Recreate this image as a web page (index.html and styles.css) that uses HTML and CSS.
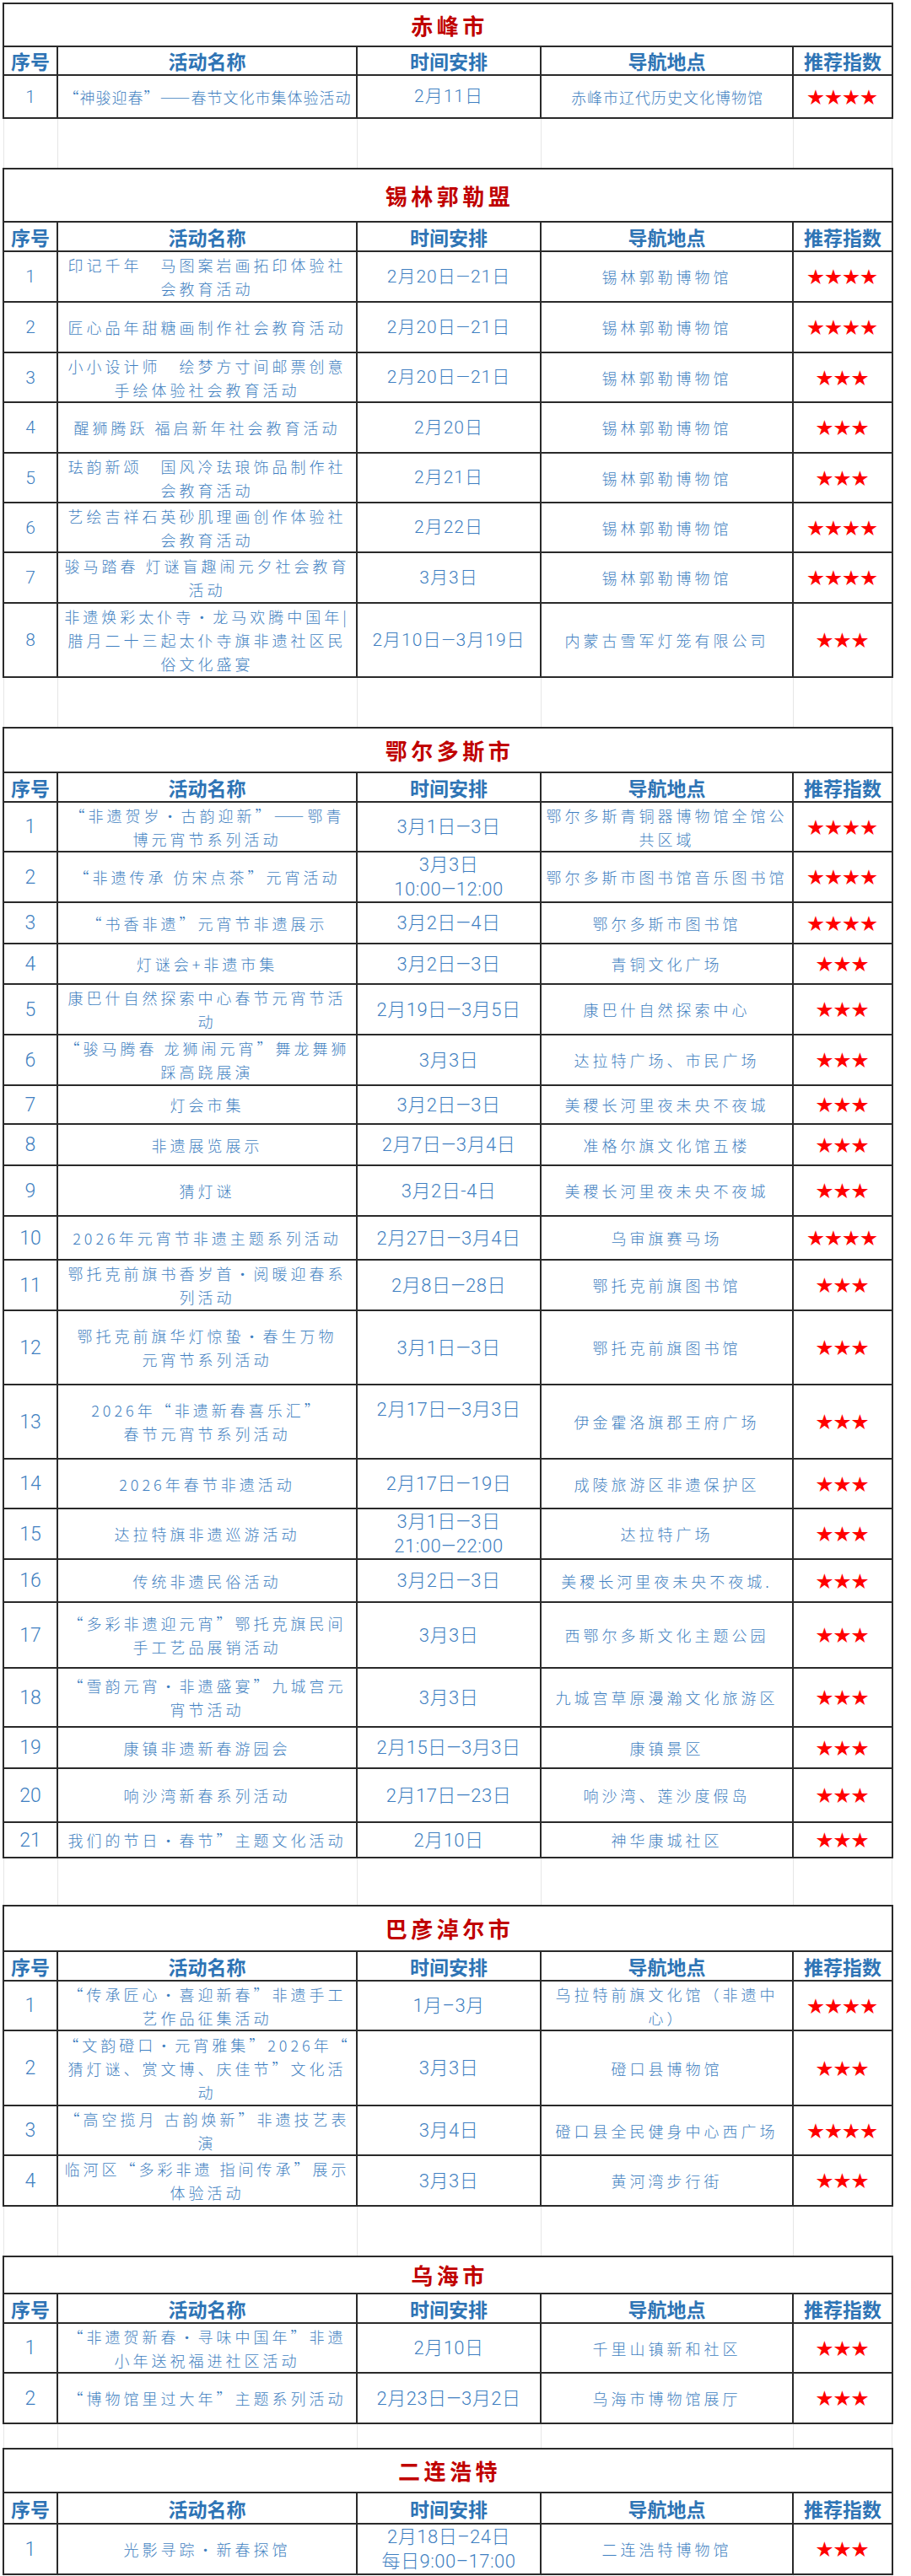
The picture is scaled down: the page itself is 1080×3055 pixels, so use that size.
FILE: index.html
```html
<!DOCTYPE html>
<html lang="zh-CN">
<head>
<meta charset="utf-8">
<title>活动导航</title>
<link rel="stylesheet" href="styles.css">
</head>
<body>
<div class="sheet">

<table class="tbl t1">
<colgroup><col class="c1"><col class="c2"><col class="c3"><col class="c4"><col class="c5"></colgroup>
<tr class="ttl h51"><td colspan="5">赤峰市</td></tr>
<tr class="hd h34"><th>序号</th><th>活动名称</th><th>时间安排</th><th>导航地点</th><th>推荐指数</th></tr>
<tr class="h51"><td class="no">1</td><td class="nm">“神骏迎春”——春节文化市集体验活动</td><td class="tm">2月11日</td><td class="lc">赤峰市辽代历史文化博物馆</td><td class="st">★★★★</td></tr>
</table>

<div class="gap"><span></span><span></span><span></span><span></span><span></span></div>

<table class="tbl">
<colgroup><col class="c1"><col class="c2"><col class="c3"><col class="c4"><col class="c5"></colgroup>
<tr class="ttl h63"><td colspan="5">锡林郭勒盟</td></tr>
<tr class="hd h35"><th>序号</th><th>活动名称</th><th>时间安排</th><th>导航地点</th><th>推荐指数</th></tr>
<tr class="h60"><td class="no">1</td><td class="nm">印记千年　马图案岩画拓印体验社<br>会教育活动</td><td class="tm">2月20日—21日</td><td class="lc">锡林郭勒博物馆</td><td class="st">★★★★</td></tr>
<tr class="h60"><td class="no">2</td><td class="nm">匠心品年甜糖画制作社会教育活动</td><td class="tm">2月20日—21日</td><td class="lc">锡林郭勒博物馆</td><td class="st">★★★★</td></tr>
<tr class="h59"><td class="no">3</td><td class="nm">小小设计师　绘梦方寸间邮票创意<br>手绘体验社会教育活动</td><td class="tm">2月20日—21日</td><td class="lc">锡林郭勒博物馆</td><td class="st">★★★</td></tr>
<tr class="h60"><td class="no">4</td><td class="nm">醒狮腾跃 福启新年社会教育活动</td><td class="tm">2月20日</td><td class="lc">锡林郭勒博物馆</td><td class="st">★★★</td></tr>
<tr class="h59"><td class="no">5</td><td class="nm">珐韵新颂　国风冷珐琅饰品制作社<br>会教育活动</td><td class="tm">2月21日</td><td class="lc">锡林郭勒博物馆</td><td class="st">★★★</td></tr>
<tr class="h59"><td class="no">6</td><td class="nm">艺绘吉祥石英砂肌理画创作体验社<br>会教育活动</td><td class="tm">2月22日</td><td class="lc">锡林郭勒博物馆</td><td class="st">★★★★</td></tr>
<tr class="h60"><td class="no">7</td><td class="nm">骏马踏春 灯谜盲趣闹元夕社会教育<br>活动</td><td class="tm">3月3日</td><td class="lc">锡林郭勒博物馆</td><td class="st">★★★★</td></tr>
<tr class="h88"><td class="no">8</td><td class="nm">非遗焕彩太仆寺·龙马欢腾中国年|<br>腊月二十三起太仆寺旗非遗社区民<br>俗文化盛宴</td><td class="tm">2月10日—3月19日</td><td class="lc">内蒙古雪军灯笼有限公司</td><td class="st">★★★</td></tr>
</table>

<div class="gap"><span></span><span></span><span></span><span></span><span></span></div>

<table class="tbl big">
<colgroup><col class="c1"><col class="c2"><col class="c3"><col class="c4"><col class="c5"></colgroup>
<tr class="ttl h53"><td colspan="5">鄂尔多斯市</td></tr>
<tr class="hd h35"><th>序号</th><th>活动名称</th><th>时间安排</th><th>导航地点</th><th>推荐指数</th></tr>
<tr class="h59"><td class="no">1</td><td class="nm">“非遗贺岁·古韵迎新”——鄂青<br>博元宵节系列活动</td><td class="tm">3月1日—3日</td><td class="lc">鄂尔多斯青铜器博物馆全馆公<br>共区域</td><td class="st">★★★★</td></tr>
<tr class="h59"><td class="no">2</td><td class="nm">“非遗传承 仿宋点茶”元宵活动</td><td class="tm">3月3日<br>10:00—12:00</td><td class="lc">鄂尔多斯市图书馆音乐图书馆</td><td class="st">★★★★</td></tr>
<tr class="h49"><td class="no">3</td><td class="nm">“书香非遗”元宵节非遗展示</td><td class="tm">3月2日—4日</td><td class="lc">鄂尔多斯市图书馆</td><td class="st">★★★★</td></tr>
<tr class="h48"><td class="no">4</td><td class="nm">灯谜会+非遗市集</td><td class="tm">3月2日—3日</td><td class="lc">青铜文化广场</td><td class="st">★★★</td></tr>
<tr class="h60"><td class="no">5</td><td class="nm">康巴什自然探索中心春节元宵节活<br>动</td><td class="tm">2月19日—3月5日</td><td class="lc">康巴什自然探索中心</td><td class="st">★★★</td></tr>
<tr class="h60"><td class="no">6</td><td class="nm">“骏马腾春 龙狮闹元宵”舞龙舞狮<br>踩高跷展演</td><td class="tm">3月3日</td><td class="lc">达拉特广场、市民广场</td><td class="st">★★★</td></tr>
<tr class="h46"><td class="no">7</td><td class="nm">灯会市集</td><td class="tm">3月2日—3日</td><td class="lc">美稷长河里夜未央不夜城</td><td class="st">★★★</td></tr>
<tr class="h49"><td class="no">8</td><td class="nm">非遗展览展示</td><td class="tm">2月7日—3月4日</td><td class="lc">准格尔旗文化馆五楼</td><td class="st">★★★</td></tr>
<tr class="h60"><td class="no">9</td><td class="nm">猜灯谜</td><td class="tm">3月2日-4日</td><td class="lc">美稷长河里夜未央不夜城</td><td class="st">★★★</td></tr>
<tr class="h52"><td class="no">10</td><td class="nm">2026年元宵节非遗主题系列活动</td><td class="tm">2月27日—3月4日</td><td class="lc">乌审旗赛马场</td><td class="st">★★★★</td></tr>
<tr class="h60"><td class="no">11</td><td class="nm">鄂托克前旗书香岁首·阅暖迎春系<br>列活动</td><td class="tm">2月8日—28日</td><td class="lc">鄂托克前旗图书馆</td><td class="st">★★★</td></tr>
<tr class="h88"><td class="no">12</td><td class="nm">鄂托克前旗华灯惊蛰·春生万物<br>元宵节系列活动</td><td class="tm">3月1日—3日</td><td class="lc">鄂托克前旗图书馆</td><td class="st">★★★</td></tr>
<tr class="h88"><td class="no">13</td><td class="nm">2026年“非遗新春喜乐汇”<br>春节元宵节系列活动</td><td class="tm">2月17日—3月3日<br>&nbsp;</td><td class="lc">伊金霍洛旗郡王府广场</td><td class="st">★★★</td></tr>
<tr class="h59"><td class="no">14</td><td class="nm">2026年春节非遗活动</td><td class="tm">2月17日—19日</td><td class="lc">成陵旅游区非遗保护区</td><td class="st">★★★</td></tr>
<tr class="h60"><td class="no">15</td><td class="nm">达拉特旗非遗巡游活动</td><td class="tm">3月1日—3日<br>21:00—22:00</td><td class="lc">达拉特广场</td><td class="st">★★★</td></tr>
<tr class="h51"><td class="no">16</td><td class="nm">传统非遗民俗活动</td><td class="tm">3月2日—3日</td><td class="lc">美稷长河里夜未央不夜城.</td><td class="st">★★★</td></tr>
<tr class="h78"><td class="no">17</td><td class="nm">“多彩非遗迎元宵”鄂托克旗民间<br>手工艺品展销活动</td><td class="tm">3月3日</td><td class="lc">西鄂尔多斯文化主题公园</td><td class="st">★★★</td></tr>
<tr class="h70"><td class="no">18</td><td class="nm">“雪韵元宵·非遗盛宴”九城宫元<br>宵节活动</td><td class="tm">3月3日</td><td class="lc">九城宫草原漫瀚文化旅游区</td><td class="st">★★★</td></tr>
<tr class="h49"><td class="no">19</td><td class="nm">康镇非遗新春游园会</td><td class="tm">2月15日—3月3日</td><td class="lc">康镇景区</td><td class="st">★★★</td></tr>
<tr class="h64"><td class="no">20</td><td class="nm">响沙湾新春系列活动</td><td class="tm">2月17日—23日</td><td class="lc">响沙湾、莲沙度假岛</td><td class="st">★★★</td></tr>
<tr class="h42"><td class="no">21</td><td class="nm">我们的节日·春节”主题文化活动</td><td class="tm">2月10日</td><td class="lc">神华康城社区</td><td class="st">★★★</td></tr>
</table>

<div class="gap g56"><span></span><span></span><span></span><span></span><span></span></div>

<table class="tbl big">
<colgroup><col class="c1"><col class="c2"><col class="c3"><col class="c4"><col class="c5"></colgroup>
<tr class="ttl h54"><td colspan="5">巴彦淖尔市</td></tr>
<tr class="hd h35"><th>序号</th><th>活动名称</th><th>时间安排</th><th>导航地点</th><th>推荐指数</th></tr>
<tr class="h59"><td class="no">1</td><td class="nm">“传承匠心·喜迎新春”非遗手工<br>艺作品征集活动</td><td class="tm">1月–3月</td><td class="lc">乌拉特前旗文化馆（非遗中<br>心）</td><td class="st">★★★★</td></tr>
<tr class="h89"><td class="no">2</td><td class="nm">“文韵磴口·元宵雅集”2026年“<br>猜灯谜、赏文博、庆佳节”文化活<br>动</td><td class="tm">3月3日</td><td class="lc">磴口县博物馆</td><td class="st">★★★</td></tr>
<tr class="h59"><td class="no">3</td><td class="nm">“高空揽月 古韵焕新”非遗技艺表<br>演</td><td class="tm">3月4日</td><td class="lc">磴口县全民健身中心西广场</td><td class="st">★★★★</td></tr>
<tr class="h60"><td class="no">4</td><td class="nm">临河区“多彩非遗 指间传承”展示<br>体验活动</td><td class="tm">3月3日</td><td class="lc">黄河湾步行街</td><td class="st">★★★</td></tr>
</table>

<div class="gap"><span></span><span></span><span></span><span></span><span></span></div>

<table class="tbl big">
<colgroup><col class="c1"><col class="c2"><col class="c3"><col class="c4"><col class="c5"></colgroup>
<tr class="ttl h44"><td colspan="5">乌海市</td></tr>
<tr class="hd h35"><th>序号</th><th>活动名称</th><th>时间安排</th><th>导航地点</th><th>推荐指数</th></tr>
<tr class="h59"><td class="no">1</td><td class="nm">“非遗贺新春·寻味中国年”非遗<br>小年送祝福进社区活动</td><td class="tm">2月10日</td><td class="lc">千里山镇新和社区</td><td class="st">★★★</td></tr>
<tr class="h60"><td class="no">2</td><td class="nm">“博物馆里过大年”主题系列活动</td><td class="tm">2月23日—3月2日</td><td class="lc">乌海市博物馆展厅</td><td class="st">★★★</td></tr>
</table>

<div class="gap short"><span></span><span></span><span></span><span></span><span></span></div>

<table class="tbl big">
<colgroup><col class="c1"><col class="c2"><col class="c3"><col class="c4"><col class="c5"></colgroup>
<tr class="ttl h52"><td colspan="5">二连浩特</td></tr>
<tr class="hd h37"><th>序号</th><th>活动名称</th><th>时间安排</th><th>导航地点</th><th>推荐指数</th></tr>
<tr class="h60"><td class="no">1</td><td class="nm">光影寻踪·新春探馆</td><td class="tm">2月18日–24日<br>每日9:00–17:00</td><td class="lc">二连浩特博物馆</td><td class="st">★★★</td></tr>
</table>

<div class="gap end"><span></span><span></span><span></span><span></span><span></span></div>

</div>
</body>
</html>
```

FILE: styles.css
```css
* { box-sizing: border-box; }
html, body { margin: 0; padding: 0; background: #ffffff; }
body {
  font-family: "Noto Sans CJK SC", "Noto Sans", sans-serif;
  color: #3f7fc1;
}
.sheet { width: 1080px; padding: 3px 0 0 3px; }

.tbl {
  border-collapse: collapse;
  table-layout: fixed;
  width: 1056px;
}
.c1 { width: 64px; }
.c2 { width: 355px; }
.c3 { width: 218px; }
.c4 { width: 299px; }
.c5 { width: 118px; }

.tbl td, .tbl th {
  border: 2px solid #2a2a2a;
  padding: 0;
  text-align: center;
  vertical-align: middle;
  white-space: nowrap;
  overflow: hidden;
}

.ttl td {
  color: #c00000;
  font-weight: 700;
  font-size: 26px;
  letter-spacing: 4.5px;
  padding-left: 4px;
  line-height: 30px;
}
.hd th {
  color: #2e74b5;
  font-weight: 700;
  font-size: 23px;
  line-height: 28px;
}

.nm, .lc {
  font-size: 18px;
  font-weight: 300;
  letter-spacing: 4px;
  padding-left: 4px;
  line-height: 28px;
}
.t1 .nm, .t1 .lc { letter-spacing: 1px; padding-left: 1px; }

.no {
  font-family: "Roboto", "Liberation Sans", "Noto Sans CJK SC", sans-serif;
  font-weight: 300;
  font-size: 21px;
}
.tm {
  font-family: "Roboto", "Liberation Sans", "Noto Sans CJK SC", sans-serif;
  font-weight: 300;
  font-size: 21px;
  letter-spacing: 1px;
  line-height: 29px;
}
.big .no { font-size: 23px; }
.big .tm { font-size: 22px; letter-spacing: 0.5px; }

.st {
  color: #ff0000;
  font-size: 20px;
  letter-spacing: 1px;
  padding-left: 1px;
  line-height: 24px;
}

.h34 { height: 34px; }
.h35 { height: 35px; }
.h37 { height: 37px; }
.h42 { height: 42px; }
.h44 { height: 44px; }
.h46 { height: 46px; }
.h48 { height: 48px; }
.h49 { height: 49px; }
.h51 { height: 51px; }
.h52 { height: 52px; }
.h53 { height: 53px; }
.h54 { height: 54px; }
.h59 { height: 59px; }
.h60 { height: 60px; }
.h63 { height: 63px; }
.h64 { height: 64px; }
.h70 { height: 70px; }
.h78 { height: 78px; }
.h88 { height: 88px; }
.h89 { height: 89px; }

.gap {
  display: grid;
  grid-template-columns: 64px 355px 218px 299px 118px;
  height: 58px;
  margin-left: 1px;
}
.gap span { border-left: 1px solid #e6e6e6; }
.gap span:last-child { border-right: 1px solid #e6e6e6; }
.gap.g56 { height: 55px; }
.gap.short { height: 28px; }
.gap.end { height: 10px; }
```
